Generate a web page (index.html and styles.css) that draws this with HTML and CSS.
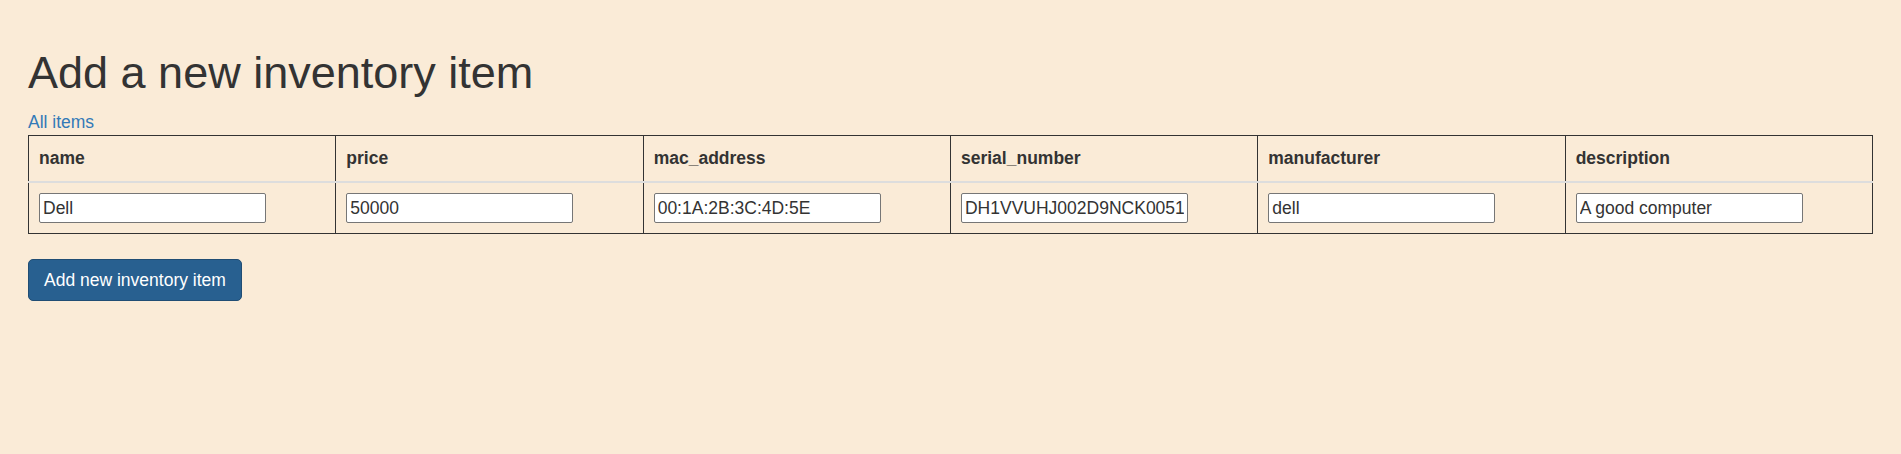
FILE: index.html
```html
<!DOCTYPE html>
<html lang="en">
<head>
<meta charset="utf-8">
<title>Add a new inventory item</title>
<link rel="stylesheet" href="styles.css">
</head>
<body>
<div class="container">
  <h1 class="title">Add a new inventory item</h1>
  <a class="back-link" href="#">All items</a>
  <form class="item-form">
    <table class="item-table">
      <thead>
        <tr>
          <th>name</th>
          <th>price</th>
          <th>mac_address</th>
          <th>serial_number</th>
          <th>manufacturer</th>
          <th>description</th>
        </tr>
      </thead>
      <tbody>
        <tr>
          <td><input class="field" type="text" value="Dell"></td>
          <td><input class="field" type="text" value="50000"></td>
          <td><input class="field" type="text" value="00:1A:2B:3C:4D:5E"></td>
          <td><input class="field" type="text" value="DH1VVUHJ002D9NCK0051"></td>
          <td><input class="field" type="text" value="dell"></td>
          <td><input class="field" type="text" value="A good computer"></td>
        </tr>
      </tbody>
    </table>
    <button class="btn-primary" type="button">Add new inventory item</button>
  </form>
</div>
</body>
</html>
```

FILE: styles.css
```css
* {
  box-sizing: border-box;
}

html, body {
  margin: 0;
  background: #faebd7;
}

body {
  font-family: "Liberation Sans", Arial, Helvetica, sans-serif;
  font-size: 17.5px;
  line-height: 25px;
  color: #333;
}

.container {
  padding: 23px 28px;
}

.title {
  font-size: 45px;
  font-weight: 400;
  line-height: 49.5px;
  margin: 25px 0 12.5px;
  color: #333;
}

.back-link {
  display: block;
  color: #337ab7;
  text-decoration: none;
  height: 25px;
}

.item-form {
  margin: 0;
}

.item-table {
  width: 100%;
  table-layout: fixed;
  border-collapse: collapse;
  border: 1px solid #333;
  margin-bottom: 25px;
}

.item-table th,
.item-table td {
  border-left: 1px solid #333;
  border-right: 1px solid #333;
  padding: 10px;
  text-align: left;
  vertical-align: top;
}

.item-table th {
  font-weight: 700;
  border-bottom: 2px solid #ddd;
}

.field {
  display: block;
  width: 227px;
  height: 30px;
  margin: 0;
  padding: 1px 3px;
  font: inherit;
  line-height: 25px;
  color: #333;
  background: #fff;
  border: 1px solid #767676;
  border-radius: 2px;
}

.btn-primary {
  display: inline-block;
  font: inherit;
  line-height: 25px;
  padding: 7.5px 15px;
  color: #fff;
  background: #286090;
  border: 1px solid #204d74;
  border-radius: 5px;
  cursor: pointer;
}
```
